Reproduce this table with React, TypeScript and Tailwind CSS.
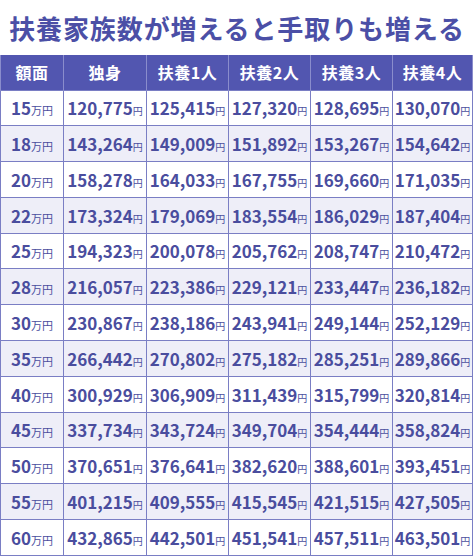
import React from "react";

const heads = ["額面", "独身", "扶養1人", "扶養2人", "扶養3人", "扶養4人"];

const rows: [string, string[]][] = [
  ["15", ["120,775", "125,415", "127,320", "128,695", "130,070"]],
  ["18", ["143,264", "149,009", "151,892", "153,267", "154,642"]],
  ["20", ["158,278", "164,033", "167,755", "169,660", "171,035"]],
  ["22", ["173,324", "179,069", "183,554", "186,029", "187,404"]],
  ["25", ["194,323", "200,078", "205,762", "208,747", "210,472"]],
  ["28", ["216,057", "223,386", "229,121", "233,447", "236,182"]],
  ["30", ["230,867", "238,186", "243,941", "249,144", "252,129"]],
  ["35", ["266,442", "270,802", "275,182", "285,251", "289,866"]],
  ["40", ["300,929", "306,909", "311,439", "315,799", "320,814"]],
  ["45", ["337,734", "343,724", "349,704", "354,444", "358,824"]],
  ["50", ["370,651", "376,641", "382,620", "388,601", "393,451"]],
  ["55", ["401,215", "409,555", "415,545", "421,515", "427,505"]],
  ["60", ["432,865", "442,501", "451,541", "457,511", "463,501"]],
];

const widths = ["w-[63px]", "w-[83px]", "w-[82px]", "w-[82px]", "w-[82px]", "w-[80px]"];

export default function App() {
  return (
    <div className="w-[474px] h-[556px] overflow-hidden bg-white font-['Noto_Sans_CJK_JP',sans-serif]">
      <div className="h-[55px] flex items-center justify-center">
        <h1 className="text-[26px] font-bold text-[#4b4fa6] tracking-[0.9px] leading-none">
          扶養家族数が増えると手取りも増える
        </h1>
      </div>
      <table className="border-collapse table-fixed w-[472px]">
        <thead>
          <tr className="h-[35px] bg-[#5256b0]">
            {heads.map((h, i) => (
              <th
                key={h}
                className={`${widths[i]} border-x border-[#8a8dcc] text-white text-[16px] font-bold p-0 tracking-[0.5px]`}
              >
                {h}
              </th>
            ))}
          </tr>
        </thead>
        <tbody>
          {rows.map(([g, vals], ri) => (
            <tr key={g} className={`h-[35.8px] ${ri % 2 ? "bg-[#eeeef8]" : "bg-white"}`}>
              <td className="border border-[#7a7ec4] text-center p-0 text-[#4a4d9e]">
                <span className="text-[17px] font-bold">{g}</span>
                <span className="text-[11px]">万円</span>
              </td>
              {vals.map((v, i) => (
                <td key={i} className="border border-[#7a7ec4] text-center p-0 text-[#4a4d9e] whitespace-nowrap">
                  <span className="text-[17px] font-bold">{v}</span>
                  <span className="text-[10px]">円</span>
                </td>
              ))}
            </tr>
          ))}
        </tbody>
      </table>
    </div>
  );
}
